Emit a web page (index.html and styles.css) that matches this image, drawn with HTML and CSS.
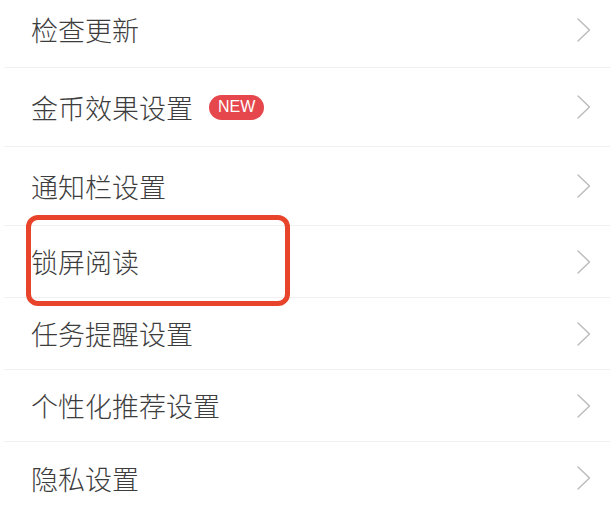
FILE: index.html
```html
<!DOCTYPE html>
<html lang="zh-CN">
<head>
<meta charset="utf-8">
<title>设置</title>
<link rel="stylesheet" href="styles.css">
</head>
<body>
<ul class="menu">
  <li class="row row-first">
    <span class="label">检查更新</span>
    <svg class="chev" viewBox="0 0 14 24" width="14" height="24"><polyline points="1,1 12.5,12 1,23"/></svg>
  </li>
  <li class="row row-tall">
    <span class="label">金币效果设置<span class="badge">NEW</span></span>
    <svg class="chev" viewBox="0 0 14 24" width="14" height="24"><polyline points="1,1 12.5,12 1,23"/></svg>
  </li>
  <li class="row row-tall">
    <span class="label">通知栏设置</span>
    <svg class="chev" viewBox="0 0 14 24" width="14" height="24"><polyline points="1,1 12.5,12 1,23"/></svg>
  </li>
  <li class="row">
    <span class="label">锁屏阅读</span>
    <svg class="chev" viewBox="0 0 14 24" width="14" height="24"><polyline points="1,1 12.5,12 1,23"/></svg>
    <span class="highlight"></span>
  </li>
  <li class="row">
    <span class="label">任务提醒设置</span>
    <svg class="chev" viewBox="0 0 14 24" width="14" height="24"><polyline points="1,1 12.5,12 1,23"/></svg>
  </li>
  <li class="row">
    <span class="label">个性化推荐设置</span>
    <svg class="chev" viewBox="0 0 14 24" width="14" height="24"><polyline points="1,1 12.5,12 1,23"/></svg>
  </li>
  <li class="row row-last">
    <span class="label">隐私设置</span>
    <svg class="chev" viewBox="0 0 14 24" width="14" height="24"><polyline points="1,1 12.5,12 1,23"/></svg>
  </li>
</ul>
</body>
</html>
```
FILE: styles.css
```css
html, body {
  margin: 0;
  padding: 0;
  background: #ffffff;
  overflow: hidden;
}

.menu {
  list-style: none;
  margin: 0;
  padding: 0;
  font-family: "Noto Sans CJK SC", "Noto Sans", sans-serif;
}

.row {
  position: relative;
  display: flex;
  align-items: center;
  justify-content: space-between;
  box-sizing: border-box;
  height: 72px;
  margin-left: 4px;
  padding: 0 19px 0 27px;
  border-bottom: 1px solid #f0f0f0;
}

.row-first {
  height: 68px;
  padding-bottom: 8px;
}

.row-tall {
  height: 79px;
}

.row-last {
  border-bottom: none;
}

.label {
  display: flex;
  align-items: center;
  font-size: 27px;
  font-weight: 300;
  line-height: 1;
  color: #3d3d3d;
}

.badge {
  display: inline-flex;
  align-items: center;
  justify-content: center;
  box-sizing: border-box;
  height: 25px;
  margin-left: 16px;
  padding: 0 9px;
  border-radius: 13px;
  background: #e5474d;
  color: #ffffff;
  font-family: "Liberation Sans", Arial, sans-serif;
  font-size: 16px;
  font-weight: 400;
}

.chev {
  display: block;
  fill: none;
  stroke: #bbbbbb;
  stroke-width: 1.4;
  stroke-linecap: round;
  stroke-linejoin: round;
}

.highlight {
  position: absolute;
  left: 22px;
  top: -11px;
  width: 264px;
  height: 91px;
  box-sizing: border-box;
  border: 5px solid #e8432b;
  border-radius: 12px;
}
```
